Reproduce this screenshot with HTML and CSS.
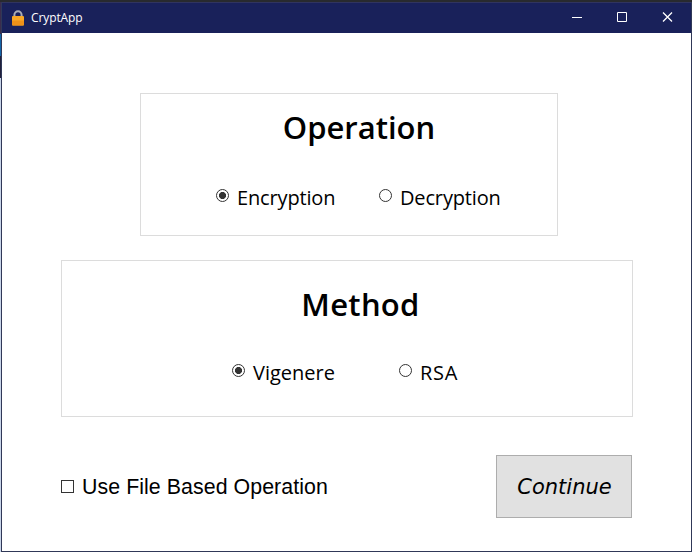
FILE: index.html
```html
<!DOCTYPE html>
<html lang="en">
<head>
<meta charset="utf-8">
<title>CryptApp</title>
<link rel="stylesheet" href="styles.css">
</head>
<body>
<div class="window">
  <header class="titlebar">
    <svg class="lock" width="14" height="16" viewBox="0 0 14 16">
      <path d="M3.4 8V5a3.6 3.8 0 0 1 7.2 0V8" fill="none" stroke="#a9adb5" stroke-width="2"/>
      <rect x="1" y="6" width="12" height="9.5" rx="1" fill="#f8a826"/>
      <path d="M1 10.5h12v4a1 1 0 0 1-1 1H2a1 1 0 0 1-1-1z" fill="#ee9118"/>
    </svg>
    <span class="app-name">CryptApp</span>
    <div class="controls">
      <svg width="45" height="31" viewBox="0 0 45 31"><path d="M17 14.5h10"/></svg>
      <svg width="45" height="31" viewBox="0 0 45 31"><path d="M17.5 9.5h9v9h-9z"/></svg>
      <svg width="45" height="31" viewBox="0 0 45 31"><path class="close" d="M18 9.5l9 9M27 9.5L18 18.5"/></svg>
    </div>
  </header>
  <main class="content">
    <section class="group operation">
      <h1 class="heading">Operation</h1>
      <div class="options">
        <label class="option encryption"><span class="radio checked"></span><span class="text">Encryption</span></label>
        <label class="option"><span class="radio"></span><span class="text">Decryption</span></label>
      </div>
    </section>
    <section class="group method">
      <h1 class="heading">Method</h1>
      <div class="options">
        <label class="option vigenere"><span class="radio checked"></span><span class="text">Vigenere</span></label>
        <label class="option rsa"><span class="radio"></span><span class="text">RSA</span></label>
      </div>
    </section>
    <footer class="actions">
      <label class="file-option"><span class="checkbox"></span><span class="file-text">Use File Based Operation</span></label>
      <button class="continue"><span>Continue</span></button>
    </footer>
  </main>
</div>
</body>
</html>
```
FILE: styles.css
```css
* { box-sizing: border-box; }

body {
  margin: 0;
  height: 552px;
  padding: 2px 0 0 1px;
  overflow: hidden;
  background: linear-gradient(#282a2e 0 2px, #3a2c4c 2px 34px, #1465a8 34px 56px, #20203c 56px 78px, #c8d4e8 78px);
  font-family: "Open Sans", "Noto Sans", sans-serif;
  color: #000;
}

.window {
  height: 550px;
  border: 1px solid #303858;
  border-top: 0;
  background: #fff;
}

.titlebar {
  height: 31px;
  display: flex;
  align-items: center;
  padding-left: 9px;
  background: #19215a;
  border-top: 1px solid #30345f;
  color: #fff;
}

.lock { margin-right: 6px; }

.app-name {
  font-size: 12px;
  line-height: 16px;
  letter-spacing: -0.1px;
}

.controls {
  display: flex;
  margin-left: auto;
  margin-right: 1px;
}

.controls svg {
  fill: none;
  stroke: #fff;
  stroke-width: 1;
}

.controls .close { stroke-width: 1.3; }

.content { padding: 60px 58px 0 59px; }

.group {
  border: 1px solid #dcdcdc;
}

.operation {
  width: 418px;
  height: 143px;
  margin-left: 79px;
  padding-top: 11px;
}

.method {
  width: 572px;
  height: 157px;
  margin-top: 24px;
  padding-top: 21px;
}

.heading {
  margin: 0;
  padding-left: 20px;
  text-align: center;
  font-size: 31px;
  line-height: 44px;
  font-weight: 600;
}

.method .heading {
  padding-left: 27px;
  letter-spacing: 0.3px;
}

.options {
  display: flex;
  margin-top: 35px;
  padding-left: 75px;
}

.method .options {
  margin-top: 33px;
  padding-left: 170px;
}

.option {
  display: flex;
  width: 163px;
  gap: 8px;
  font-size: 20px;
  line-height: 28px;
}

.operation .text { letter-spacing: -0.15px; }

.vigenere { width: 167px; }

.rsa .text { letter-spacing: 0.7px; }

.radio {
  width: 13px;
  height: 13px;
  margin-top: 5px;
  flex: none;
  border: 1px solid #333;
  border-radius: 50%;
}

.checked { background: radial-gradient(circle, #333 3.3px, transparent 3.8px); }

.text { white-space: nowrap; }

.actions {
  display: flex;
  margin-top: 38px;
  justify-content: space-between;
}

.file-option {
  display: flex;
  align-items: center;
  height: 63px;
  gap: 8px;
  font-family: "Liberation Sans", sans-serif;
  font-size: 21.33px;
  letter-spacing: 0.07px;
  white-space: nowrap;
}

.file-text { padding-top: 2px; }

.checkbox {
  width: 13px;
  height: 13px;
  border: 1px solid #333;
}

.continue {
  width: 136px;
  height: 63px;
  margin-right: 1px;
  padding: 0 0 0 1px;
  border: 1px solid #adadad;
  background: #e1e1e1;
  color: #000;
  font: italic 21px/30px "DejaVu Sans", sans-serif;
}
```
